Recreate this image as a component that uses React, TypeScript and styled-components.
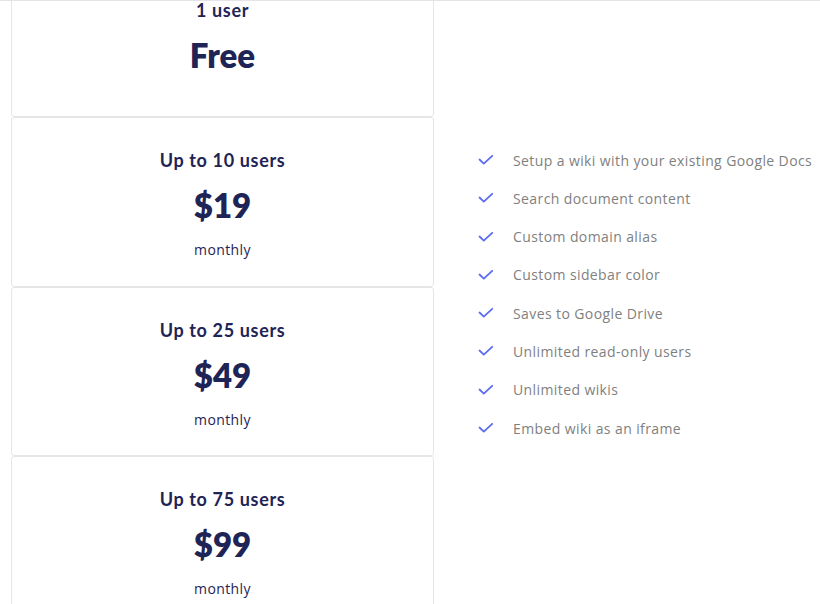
import React from "react";
import styled, { createGlobalStyle } from "styled-components";

const GlobalStyle = createGlobalStyle`
  html, body { margin: 0; padding: 0; background: #ffffff; }
  body { font-family: "Lato", "Open Sans", sans-serif; }
  * { box-sizing: border-box; }
`;

const Page = styled.div`
  width: 820px;
  height: 604px;
  overflow: hidden;
  border-top: 1px solid #e3e3e8;
  display: flex;
  align-items: flex-start;
`;

const PlanColumn = styled.div`
  width: 423px;
  margin-left: 11px;
  display: flex;
  flex-direction: column;
`;

const Card = styled.div<{ $first?: boolean }>`
  border: 1px solid #e6e6e6;
  border-radius: 3px;
  display: flex;
  flex-direction: column;
  align-items: center;
  padding: 30px 0 ${(p) => (p.$first ? "41px" : "25.5px")};
  margin-top: ${(p) => (p.$first ? "-34px" : "0")};
  background: #fff;
`;

const Seats = styled.div`
  font-family: "Lato", sans-serif;
  font-weight: 700;
  font-size: 18px;
  line-height: 24px;
  letter-spacing: 0.65px;
  color: #1f2456;
`;

const Price = styled.div`
  margin-top: 13px;
  font-family: "Lato", sans-serif;
  font-weight: 800;
  font-size: 33px;
  line-height: 40px;
  color: #1f2456;
`;

const Period = styled.div`
  margin-top: 15px;
  font-family: "Open Sans", sans-serif;
  font-size: 14px;
  line-height: 20px;
  color: #1f2456;
  letter-spacing: 0.4px;
`;

const Features = styled.ul`
  list-style: none;
  margin: 149px 0 0 44px;
  padding: 0;
  display: flex;
  flex-direction: column;
  gap: 18.3px;
`;

const Feature = styled.li`
  display: flex;
  align-items: center;
  height: 20px;
  font-family: "Open Sans", sans-serif;
  font-size: 14px;
  letter-spacing: 0.4px;
  color: #7f7f7f;
  white-space: nowrap;
`;

const Check = styled.svg`
  width: 16px;
  height: 12px;
  margin-right: 19px;
  flex: none;
`;

const CheckIcon = () => (
  <Check viewBox="0 0 16 12">
    <path d="M1.5 5.5 L5.8 9.6 L14.2 1.8" fill="none" stroke="#5b6cf0" strokeWidth="1.8" strokeLinecap="round" strokeLinejoin="round" />
  </Check>
);

const plans = [
  { seats: "Up to 10 users", price: "$19" },
  { seats: "Up to 25 users", price: "$49" },
  { seats: "Up to 75 users", price: "$99" },
];

const features = [
  "Setup a wiki with your existing Google Docs",
  "Search document content",
  "Custom domain alias",
  "Custom sidebar color",
  "Saves to Google Drive",
  "Unlimited read-only users",
  "Unlimited wikis",
  "Embed wiki as an iframe",
];

export default function App() {
  return (
    <>
      <GlobalStyle />
      <Page>
        <PlanColumn>
          <Card $first>
            <Seats>1 user</Seats>
            <Price>Free</Price>
          </Card>
          {plans.map((p) => (
            <Card key={p.price}>
              <Seats>{p.seats}</Seats>
              <Price>{p.price}</Price>
              <Period>monthly</Period>
            </Card>
          ))}
        </PlanColumn>
        <Features>
          {features.map((f) => (
            <Feature key={f}>
              <CheckIcon />
              {f}
            </Feature>
          ))}
        </Features>
      </Page>
    </>
  );
}
